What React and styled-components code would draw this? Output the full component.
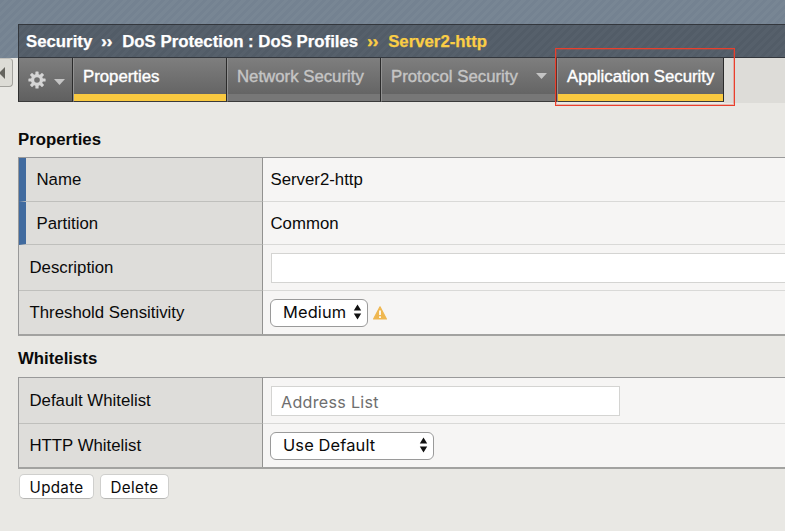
import React from "react";
import styled, { createGlobalStyle } from "styled-components";

const Global = createGlobalStyle`
  * { box-sizing: border-box; }
  body { margin: 0; background: #e9e8e4; overflow: hidden; }
`;

const Page = styled.div`
  position: relative;
  width: 785px;
  height: 531px;
  overflow: hidden;
  background: #e9e8e4;
  color: #0a0a0a;
  font: 16.8px/20px "Liberation Sans", Arial, sans-serif;
`;

const Banner = styled.header`
  height: 58px;
  padding: 24px 0 0 18px;
  background: repeating-linear-gradient(135deg, #748291 0 3px, #788694 3px 6px);
`;

const Breadcrumb = styled.nav`
  display: flex;
  align-items: center;
  height: 34px;
  padding: 1px 0 0 7px;
  border: 1px solid #33373d;
  border-right: 0;
  background: repeating-linear-gradient(135deg, #525c67 0 3px, #56606b 3px 6px);
  color: #fff;
  font-weight: bold;
  white-space: pre;
`;

const Crumb = styled.span`
  color: ${(p) => (p.$current ? "#fbce45" : "#fff")};
  -webkit-text-stroke: 0.25px;
`;

const Chevrons = styled.span`
  width: 12px;
  margin: 0 9px;
  height: 20px;
  line-height: 19px;
  color: ${(p) => (p.$current ? "#fbce45" : "#fff")};
  -webkit-text-stroke: 0.5px;
`;

const TabStrip = styled.div`
  display: flex;
  height: 45px;
`;

const Gutter = styled.div`
  width: 18px;
  flex: none;
`;

const CollapseHandle = styled.button`
  display: flex;
  align-items: center;
  width: 13px;
  height: 29px;
  padding: 0;
  border: 1px solid #a3a29d;
  border-left: 0;
  border-top-color: #c2c1bc;
  border-radius: 0 4px 4px 0;
  background: #dddcd6;
`;

const TabFill = styled.div`
  flex: 1;
  background: #dddcd8;
`;

const Tab = styled.div`
  display: flex;
  flex: none;
  justify-content: space-between;
  width: ${(p) => p.$width}px;
  height: 44px;
  padding: 9px 9px 0 9px;
  border-left: 1px solid #929292;
  border-right: 1px solid #2b2b2b;
  border-bottom: 1px solid #3a3a3a;
  background: linear-gradient(${(p) => (p.$active ? "#f9c940, #f9c940" : "#777, #777")})
      0 100% / 100% ${(p) => (p.$menu ? 0 : 7)}px no-repeat,
    linear-gradient(#7e7e7e, #606060);
  color: ${(p) => (p.$active ? "#fff" : "#c5c5c5")};
  -webkit-text-stroke: 0.4px;
  white-space: nowrap;
  ${(p) => p.$menu && "border-left-color: #303030;"}
`;

const MenuIcons = styled.div`
  display: flex;
  align-items: center;
  gap: 8px;
  height: 26px;
`;

const Caret = styled.svg`
  flex: none;
  margin-top: ${(p) => p.$top || 0}px;
`;

const Content = styled.main`
  padding-left: 18px;
`;

const Heading = styled.h2`
  height: ${(p) => p.$height}px;
  margin: 0;
  padding-top: ${(p) => p.$top}px;
  font-size: 16.8px;
  line-height: 20px;
`;

const Table = styled.section`
  border: 1px solid #999;
  border-width: 1px 0 2px 1px;
  border-bottom-color: #a2a2a0;
`;

const Row = styled.div`
  display: flex;
  height: ${(p) => p.$height}px;
  border-bottom: ${(p) => (p.$last ? 0 : 1)}px solid #d9d9d7;
`;

const Label = styled.div`
  display: flex;
  align-items: center;
  width: 244px;
  flex: none;
  margin-bottom: ${(p) => (p.$last ? 0 : -1)}px;
  padding: 1px 0 0 10.5px;
  border-right: 1px solid #929290;
  border-bottom: ${(p) => (p.$last ? 0 : 1)}px solid #bfbfbc;
  background: #dedddA;
  ${(p) => p.$required && "border-left: 7px solid #416b9f;"}
`;

const Value = styled.div`
  display: flex;
  align-items: center;
  flex: 1;
  min-width: 0;
  padding-left: 7px;
  background: #f6f5f4;
`;

const PlainText = styled.span`
  padding: 1px 0 0 0.5px;
`;

const TextInput = styled.input`
  flex: none;
  width: ${(p) => p.$width}px;
  height: 30px;
  margin-left: ${(p) => p.$inset || 0}px;
  padding: 2px 9px 0;
  border: 1px solid #d4d4d2;
  background: #fff;
  font: 16.1px Inter, sans-serif;
  letter-spacing: 0.3px;
  &::placeholder { color: #6e6e6e; opacity: 1; }
`;

const SelectBox = styled.div`
  display: flex;
  align-items: center;
  justify-content: space-between;
  width: ${(p) => p.$width}px;
  height: 28px;
  padding: 0 5px 1px 12px;
  border: 1px solid #9a9a9a;
  border-radius: 6px;
  background: #fff;
  font: 16.4px Inter, sans-serif;
  letter-spacing: 0.15px;
`;

const Warning = styled.svg`
  margin-left: 5px;
`;

const Actions = styled.div`
  display: flex;
  gap: 6px;
  padding: 5px 0 0 1px;
`;

const Button = styled.button`
  width: ${(p) => p.$width}px;
  height: 25px;
  padding: 1px 0 0;
  border: 1px solid #cfcfcd;
  border-bottom-color: #b7b7b5;
  border-radius: 5px;
  background: #fff;
  color: #0a0a0a;
  font: 15.2px Inter, sans-serif;
  letter-spacing: 0.3px;
`;

const Highlight = styled.div`
  position: absolute;
  left: 555px;
  top: 48px;
  width: 180px;
  height: 58px;
  border: 1px solid #e93f2c;
  box-shadow: inset 0 0 0 1px rgba(233, 63, 44, 0.3);
  pointer-events: none;
`;

const TabCaret = ({ top }) => (
  <Caret $top={top} width="11" height="6" viewBox="0 0 11 6">
    <path d="M0 0H11L5.5 6Z" fill="#c4c4c4" />
  </Caret>
);

const Gear = () => (
  <svg width="18" height="18" viewBox="-9 -9 18 18">
    <g fill="#d5d5d5">
      {[0, 45, 90, 135].map((a) => (
        <rect key={a} x="-1.6" y="-8.6" width="3.2" height="17.2" rx=".7" transform={`rotate(${a})`} />
      ))}
      <circle r="6.1" />
    </g>
    <circle r="2.8" fill="#707070" />
  </svg>
);

const Select = ({ width, children }) => (
  <SelectBox $width={width}>
    {children}
    <svg width="9" height="16" viewBox="0 0 9 16">
      <path d="M4.5 .5 8.2 6.6H.8ZM4.5 15.5.8 9.4H8.2Z" fill="#111" />
    </svg>
  </SelectBox>
);

const Field = ({ label, height, required, last, children }) => (
  <Row $height={height} $last={last}>
    <Label $required={required} $last={last}>{label}</Label>
    <Value>{children}</Value>
  </Row>
);

export default function App() {
  return (
    <Page>
      <Global />
      <Banner>
        <Breadcrumb>
          <Crumb>Security</Crumb>
          <Chevrons>››</Chevrons>
          <Crumb>DoS Protection : DoS Profiles</Crumb>
          <Chevrons $current>››</Chevrons>
          <Crumb $current>Server2-http</Crumb>
        </Breadcrumb>
      </Banner>
      <TabStrip>
        <Gutter>
          <CollapseHandle>
            <svg width="5" height="12" viewBox="0 0 5 12">
              <path d="M5 0V12L-1 6Z" fill="#66655f" />
            </svg>
          </CollapseHandle>
        </Gutter>
        <Tab $width={55} $menu>
          <MenuIcons>
            <Gear />
            <TabCaret top={3} />
          </MenuIcons>
        </Tab>
        <Tab $width={154} $active>Properties</Tab>
        <Tab $width={154}>Network Security</Tab>
        <Tab $width={176}>
          Protocol Security
          <TabCaret top={6} />
        </Tab>
        <Tab $width={167} $active>Application Security</Tab>
        <TabFill />
      </TabStrip>
      <Content>
        <Heading $height={54} $top={27}>Properties</Heading>
        <Table>
          <Field label="Name" height={44} required>
            <PlainText>Server2-http</PlainText>
          </Field>
          <Field label="Partition" height={43} required>
            <PlainText>Common</PlainText>
          </Field>
          <Field label="Description" height={46}>
            <TextInput $width={540} $inset={1} aria-label="Description" />
          </Field>
          <Field label="Threshold Sensitivity" height={43} last>
            <Select width={98}>Medium</Select>
            <Warning width="14" height="14" viewBox="0 0 14 14">
              <path d="M7 .8 13.4 13H.6Z" fill="#efb750" stroke="#efb750" strokeWidth="1.2" strokeLinejoin="round" />
              <path d="M7 4.5V9M7 10.2V12" stroke="#fff" strokeWidth="1.7" />
            </Warning>
          </Field>
        </Table>
        <Heading $height={41} $top={13}>Whitelists</Heading>
        <Table>
          <Field label="Default Whitelist" height={46}>
            <TextInput $width={349} $inset={1} placeholder="Address List" />
          </Field>
          <Field label="HTTP Whitelist" height={43} last>
            <Select width={164}>Use Default</Select>
          </Field>
        </Table>
        <Actions>
          <Button $width={75}>Update</Button>
          <Button $width={69}>Delete</Button>
        </Actions>
      </Content>
      <Highlight />
    </Page>
  );
}
